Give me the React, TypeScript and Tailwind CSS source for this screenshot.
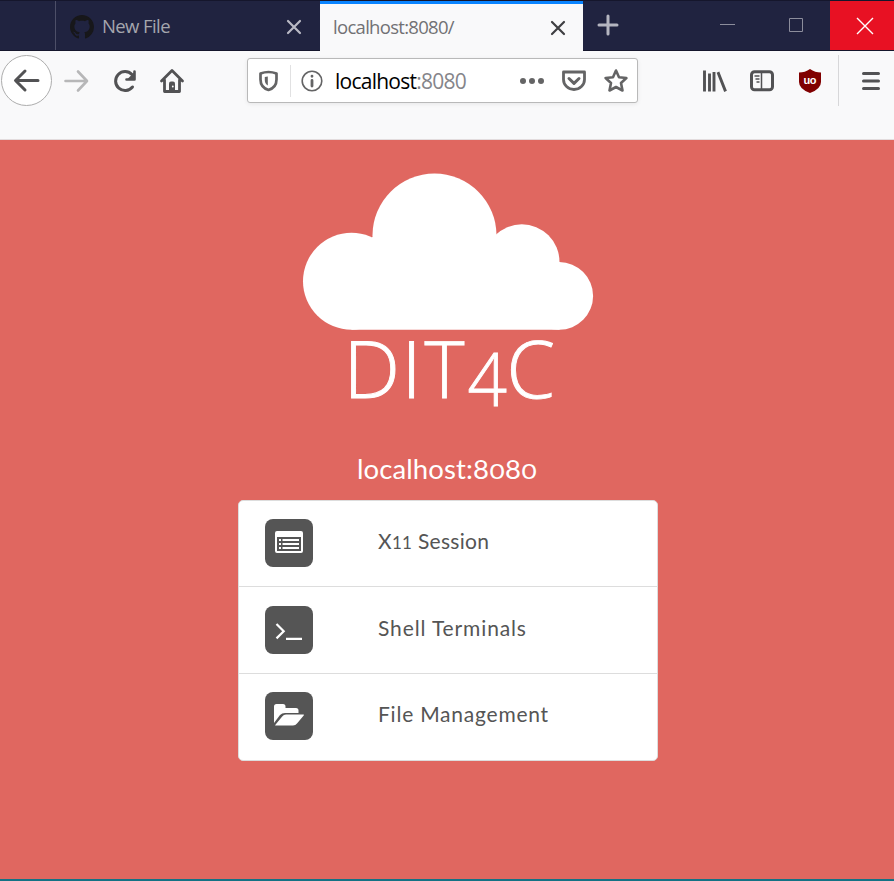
import React from 'react';

type IconProps = { box: string; className: string; children: React.ReactNode };

// Line icon whose viewBox is given in window coordinates.
const Icon = ({ box, className, children }: IconProps) => (
  <svg viewBox={box} className={`block shrink-0 ${className}`} fill="none" stroke="currentColor" strokeWidth="3" strokeLinecap="round" strokeLinejoin="round">
    {children}
  </svg>
);

const TabStrip = () => (
  <div className="flex h-[51px] border-t border-b border-[#15162c] bg-[#202340]">
    <div className="w-[55px] shrink-0" />
    <div className="flex w-[265px] shrink-0 items-center border-l border-[#4d4f68] pl-[14px]">
      <svg viewBox="0 0 16 16" className="mt-[3px] h-6 w-6 shrink-0" fill="#17171a">
        <path d="M8 0C3.58 0 0 3.58 0 8c0 3.54 2.29 6.53 5.47 7.59.4.07.55-.17.55-.38 0-.19-.01-.82-.01-1.49-2.01.37-2.53-.49-2.69-.94-.09-.23-.48-.94-.82-1.13-.28-.15-.68-.52-.01-.53.63-.01 1.08.58 1.23.82.72 1.21 1.87.87 2.33.66.07-.52.28-.87.51-1.07-1.78-.2-3.64-.89-3.64-3.95 0-.87.31-1.59.82-2.15-.08-.2-.36-1.02.08-2.12 0 0 .67-.21 2.2.82.64-.18 1.32-.27 2-.27s1.36.09 2 .27c1.53-1.04 2.2-.82 2.2-.82.44 1.1.16 1.92.08 2.12.51.56.82 1.27.82 2.15 0 3.07-1.87 3.75-3.65 3.95.29.25.54.73.54 1.48 0 1.07-.01 1.93-.01 2.2 0 .21.15.46.55.38A8.01 8.01 0 0 0 16 8c0-4.42-3.58-8-8-8z" />
      </svg>
      <span className="ml-[8px] mt-[1px] w-[184px] text-[18.5px] leading-6 tracking-[-0.6px] text-[#a5a6ad]">New File</span>
      <Icon box="286 19 16 16" className="mt-[3px] h-4 w-4 text-[#b9b9c4]">
        <path d="M288 21l12 12M300 21l-12 12" strokeWidth="2.2" />
      </Icon>
    </div>
    <div className="-mb-px flex w-[263px] shrink-0 items-center border-t-[3px] border-[#0a84ff] bg-[#f9f9fa] pl-[13px]">
      <span className="-mt-[2px] w-[217px] text-[18.5px] leading-6 tracking-[-0.7px] text-[#717174]">localhost:8080/</span>
      <Icon box="550 19 16 16" className="h-4 w-4 text-[#3f3f42]">
        <path d="M552 21l12 12M564 21l-12 12" strokeWidth="2.2" />
      </Icon>
    </div>
    <Icon box="596 13 24 24" className="ml-[13px] mt-3 h-6 w-6 text-[#b4b5c0]">
      <path d="M608 16v18M599 25h18" />
    </Icon>
    <svg viewBox="718 15 90 20" className="ml-[98px] mt-[14px] h-5 w-[90px] shrink-0" fill="none" stroke="#8c8d9c">
      <path d="M720 24.5h15M789.500 18.500h13v13h-13z" />
    </svg>
    <div className="ml-auto flex w-16 items-center justify-center bg-[#e81123] pl-[6px]">
      <svg viewBox="0 0 18 18" className="h-[18px] w-[18px]" stroke="#fff" strokeWidth="1.4"><path d="M1 1l16 16M17 1L1 17" /></svg>
    </div>
  </div>
);

const AddressBar = () => (
  <div className="mt-[7px] ml-[61px] flex h-[45px] w-[391px] shrink-0 items-center rounded-[3px] border border-[#b9b9b9] bg-white text-[#646465] shadow-[0_1px_4px_rgba(0,0,0,0.08)]">
    <Icon box="257 69 24 24" className="ml-[9px] h-6 w-6">
      <path d="M260.500 73.500q8-3 16 0v6q0 8-8 10.500-8-2.500-8-10.500z" strokeWidth="2.7" />
      <path d="M267.800 76.500v9q-3-2-3-5.500v-3z" fill="currentColor" stroke="none" />
    </Icon>
    <div className="ml-[9px] h-8 w-px bg-[#e1e1e2]" />
    <Icon box="300 69 24 24" className="ml-[9px] h-6 w-6">
      <circle cx="312" cy="81" r="9.800" strokeWidth="1.6" />
      <path d="M312 80.500v5.500M312 76.200v.1" strokeWidth="2.8" />
    </Icon>
    <span className="ml-[11px] w-[183px] text-[21px] leading-7 tracking-[-0.75px] text-black">localhost<span className="text-[#85858a]">:8080</span></span>
    <Icon box="518 69 28 24" className="h-6 w-7">
      <g fill="currentColor" stroke="none"><circle cx="523" cy="81" r="3" /><circle cx="532" cy="81" r="3" /><circle cx="541" cy="81" r="3" /></g>
    </Icon>
    <Icon box="561 69 26 24" className="ml-[15px] h-6 w-[26px]">
      <path d="M563.500 72h21v7.500a10.500 10 0 0 1-21 0z" strokeWidth="2.8" />
      <path d="M569 78.500l5 4.800 5-4.800" />
    </Icon>
    <Icon box="603 68 26 26" className="ml-4 h-[26px] w-[26px]">
      <path d="M616 70.500l3 6.700 7.400.8-5.400 5 1.500 7.500-6.500-3.500-6.500 3.500 1.500-7.500-5.400-5 7.400-.8z" strokeWidth="2.6" />
    </Icon>
  </div>
);

const Toolbar = () => (
  <div className="flex h-[89px] border-b border-[#e3dcdd] bg-[#f9f9fa] text-[#525254]">
    <div className="ml-px mt-1 flex h-[51px] w-[51px] shrink-0 items-center justify-center rounded-full border border-[#adadad] bg-white">
      <Icon box="13 67 28 28" className="h-7 w-7"><path d="M38 80.500H16M25 71l-9.500 9.500L25 90" /></Icon>
    </div>
    <Icon box="62 67 28 28" className="ml-[10px] mt-4 h-7 w-7 text-[#b7b7b8]"><path d="M65.500 81h21M78 71.500l9 9.500-9 9.500" strokeWidth="2.600" /></Icon>
    <Icon box="110 67 28 28" className="ml-5 mt-4 h-7 w-7">
      <path d="M132.500 87a9.500 9.500 0 1 1-.5-12.500" />
      <path d="M134.500 71.500v8h-8" strokeWidth="2.600" />
      <path d="M134.500 72v7.500H127z" fill="currentColor" stroke="none" />
    </Icon>
    <Icon box="158 67 28 28" className="ml-5 mt-4 h-7 w-7">
      <path d="M161.500 81L172 70.500 182.500 81M164.500 80v11.500h15V80" strokeWidth="2.800" />
      <path d="M169 92v-8.500a2 2 0 0 1 2-2h2a2 2 0 0 1 2 2V92z" fill="currentColor" stroke="none" />
      <circle cx="172.800" cy="86.500" r=".9" fill="#fff" stroke="none" />
    </Icon>
    <AddressBar />
    <Icon box="702 67 26 28" className="ml-16 mt-4 h-7 w-[26px]">
      <path d="M704.500 72v18M709.500 75v15M714 73.500V90M718.500 73.500L725 90" strokeLinecap="square" strokeWidth="2.900" />
    </Icon>
    <Icon box="748 67 28 28" className="ml-5 mt-4 h-7 w-7">
      <rect x="751.500" y="71.800" width="21" height="18" rx="3" />
      <path d="M761.500 72v18" strokeWidth="1.500" />
      <path d="M755 76h4M756 79h3M757 82h2" strokeWidth="1.400" />
    </Icon>
    <svg viewBox="798 67 24 28" className="ml-[22px] mt-4 h-7 w-6 shrink-0">
      <path d="M810 69q5 3.500 11 3.500V82q0 7-11 11-11-4-11-11v-9.500q6 0 11-3.500z" fill="#800000" />
      <text x="803.600" y="83.800" textLength="12.800" fill="#fff" className="font-['Liberation_Sans'] text-[11px] font-bold">uo</text>
    </svg>
    <div className="ml-4 mt-1 h-[51px] w-px bg-[#d7d7d9]" />
    <Icon box="858 67 26 28" className="ml-[19px] mt-4 h-7 w-[26px]"><path d="M863.500 73.500h15M863.500 81h15M863.500 88.500h15" /></Icon>
  </div>
);

const Logo = () => (
  <svg viewBox="300 170 296 270" className="mt-[30px] ml-[2px] h-[270px] w-[296px] shrink-0" fill="#fff">
    <circle cx="351.500" cy="281.200" r="48.500" />
    <circle cx="434.500" cy="235.600" r="62" />
    <circle cx="521.800" cy="262" r="37.700" />
    <circle cx="559.300" cy="295.900" r="33.800" />
    <path d="M351.500 329.700h208V262l-63-10-62-30-62 15-30 30z" />
    <g className="font-['Open_Sans',sans-serif] text-[80px] font-light" stroke="#fff" strokeWidth="0.9">
      <text y="398" x="343.500 401.500">DI</text>
      <text y="398" x="424.500" textLength="40" lengthAdjust="spacingAndGlyphs">T</text>
      <text y="405.500" x="467.500" textLength="39.500" lengthAdjust="spacingAndGlyphs" className="text-[74px]">4</text>
      <text y="398" x="506.500" textLength="48.500" lengthAdjust="spacingAndGlyphs">C</text>
    </g>
  </svg>
);

const ListGlyph = () => (
  <svg viewBox="0 0 30 24" className="-mt-[2px] h-6 w-[30px]" fill="#fff">
    <path fillRule="evenodd" d="M3 1h24a2 2 0 0 1 2 2v18a2 2 0 0 1-2 2H3a2 2 0 0 1-2-2V3a2 2 0 0 1 2-2zM3 7v14h24V7z" />
    <path d="M5 9h2v2H5zM8.500 9H25v2H8.500zM5 13h2v2H5zM8.500 13H25v2H8.500zM5 17h2v2H5zM8.500 17H25v2H8.500z" />
  </svg>
);

const TerminalGlyph = () => (
  <svg viewBox="0 0 30 24" className="h-6 w-[30px]" fill="none" stroke="#fff" strokeWidth="2.200">
    <path d="M2.500 6l7.200 7.200-7.200 7.200M12 20.900h16" />
  </svg>
);

const FolderGlyph = () => (
  <svg viewBox="0 0 30 24" className="-mt-[2px] h-6 w-[30px]" fill="#fff">
    <path d="M0 20V3.500A2.500 2.500 0 0 1 2.500 1H9a2.500 2.500 0 0 1 2.500 2.500V5H22a2.500 2.500 0 0 1 2.500 2.500V10H11q-3 0-5 2z" />
    <path d="M1.200 22l7-8.500Q9.700 11.500 12 11.500h17.500q.8 0 .2 1L23 20.500q-1.500 2-4 2H1.800q-.9 0-.6-.5z" />
  </svg>
);

type RowProps = { glyph: React.ReactNode; className: string; children: React.ReactNode };

const Row = ({ glyph, className, children }: RowProps) => (
  <div className={`flex items-start border-[#ddd] pl-[26px] ${className}`}>
    <div className="flex h-12 w-12 shrink-0 items-center justify-center rounded-lg bg-[#555]">{glyph}</div>
    <span className="ml-[65px] mt-[6px] whitespace-nowrap text-[21px] leading-8 text-[#555]">{children}</span>
  </div>
);

// Old-style zero: x-height tall and as wide as a lowercase o.
const Zero = () => <span className="inline-block w-[16px] scale-x-[1.25] text-center text-[21px] tracking-normal">0</span>;

export default function App() {
  return (
    <div className="flex h-[881px] w-[894px] flex-col overflow-hidden bg-[#e06760] font-['Open_Sans','Noto_Sans',sans-serif]">
      <TabStrip />
      <Toolbar />
      <main className="flex flex-1 flex-col items-center font-['Lato',sans-serif]">
        <Logo />
        <h1 className="mt-[10px] h-[50px] text-[27.5px] leading-[38px] tracking-[0.1px] text-white">
          localhost:8<Zero />8<Zero />
        </h1>
        <div className="ml-[2px] w-[420px] rounded-[5px] border border-[#ddd] bg-white">
          <Row glyph={<ListGlyph />} className="h-[86px] border-b pt-[18px]"><span className="tracking-[0.3px]">X<span className="text-[17px]">11</span> Session</span></Row>
          <Row glyph={<TerminalGlyph />} className="h-[87px] border-b pt-[19px]"><span className="tracking-[0.87px]">Shell Terminals</span></Row>
          <Row glyph={<FolderGlyph />} className="h-[86px] pt-[18px]"><span className="tracking-[0.77px]">File Management</span></Row>
        </div>
      </main>
      <div className="h-[2px] bg-[#147285]" />
    </div>
  );
}
